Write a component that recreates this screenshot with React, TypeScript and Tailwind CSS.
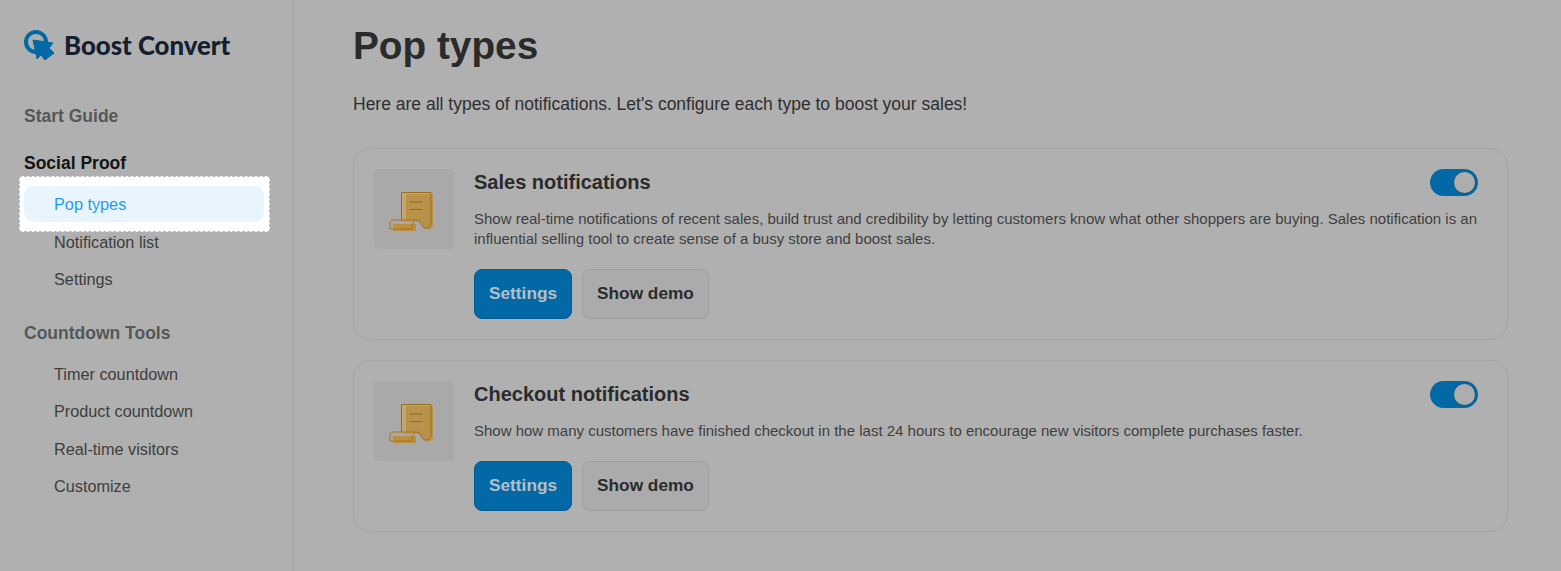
import React from 'react';

const ReceiptIcon = () => (
    <svg width="80" height="80" viewBox="0 0 80 80" fill="none">
        <path d="M28 25H59V56C59 59 56.5 60.5 53.5 60.5C49.5 60.5 48.5 57 47.5 55C46.5 53 45 52.5 42.5 52.5H28Z" fill="#b8924b" />
        <path d="M28 24.5H32V51H28Z" fill="#c4a672" />
        <path d="M27.5 51V23.5H57V54C57 57.5 54.5 59 52 59C48 59 47.5 55 46 53C45 51.5 43 51 41 51" stroke="#9c6f1c" strokeWidth="1" />
        <path d="M36 33H48M36 40.5H48" stroke="#96691a" strokeWidth="1" />
        <path d="M19 55H42V62H19Z" fill="#bb8f3d" />
        <path d="M41 51H19C17 51 16 52 16 54V60H38C38 56 39 53 41 51Z" stroke="#a9761b" strokeWidth="1" />
    </svg>
);

const Logo = () => (
    <svg width="32" height="32" viewBox="0 0 32 32" fill="none">
        <circle cx="12" cy="13" r="10" stroke="#0368a6" strokeWidth="4" />
        <path d="M9 11L29 14L25 19L30 24L21 31L17 26L13 30Z" fill="#0368a6" stroke="#0368a6" strokeWidth="1" strokeLinejoin="round" />
    </svg>
);

const SubItem = ({ label }: { label: string }) => (
    <div className="h-[37.5px] pl-[30px] flex items-center text-[16.25px] text-[#3e3e3e]">{label}</div>
);

const NotificationCard = ({ title, text }: { title: string; text: React.ReactNode }) => (
    <div className="flex border border-[#a5a5a5] rounded-[16px] p-5 pr-[29px]">
        <div className="w-20 h-20 shrink-0 rounded-[4px] bg-[#a9a9a9]">
            <ReceiptIcon />
        </div>
        <div className="ml-5 flex-1 min-w-0">
            <div className="flex items-start justify-between">
                <h2 className="text-[20px] leading-[26px] font-bold text-[#2b2b2b]">{title}</h2>
                <div className="w-12 h-[27px] rounded-full bg-[#0368a6] flex items-center justify-end pr-[3px]">
                    <div className="w-[21px] h-[21px] rounded-full bg-[#adadad] shadow-[0_0_0_1px_#1c5a84]" />
                </div>
            </div>
            <p className="mt-[13px] text-[15px] leading-[20px] text-[#3f3f3f]">{text}</p>
            <div className="mt-[20px] flex gap-[10px]">
                <button className="h-[50px] px-[14px] rounded-[8px] bg-[#0368a6] border border-[#025a90] text-[17.25px] font-bold text-[#b4bfc6]">Settings</button>
                <button className="h-[50px] px-[14px] rounded-[8px] bg-[#ababab] border border-[#9f9f9f] text-[17.25px] font-bold text-[#2b2b2b]">Show demo</button>
            </div>
        </div>
    </div>
);

export default function App() {
    return (
        <div className="w-[1561px] h-[571px] overflow-hidden flex bg-[#b0b0b0] font-['Liberation_Sans',Arial,sans-serif]">
            <aside className="w-[294px] shrink-0 border-r border-[#a3a3a3] pl-6 pr-[29px] pt-[29px]">
                <div className="flex items-center gap-2">
                    <Logo />
                    <span className="font-['Lato',sans-serif] font-black text-[25.75px] leading-[32px] text-[#14202f]">Boost Convert</span>
                </div>
                <div className="mt-[43px] text-[17.5px] leading-[24px] font-bold text-[#54585a]">Start Guide</div>
                <div className="mt-[23px] text-[17.5px] leading-[24px] font-bold text-[#141414]">Social Proof</div>
                <div className="mt-[1px] -mb-[9px] -ml-[5px] -mr-[6px] py-[9px] pl-[5px] pr-[6px] bg-white outline-1 outline-dashed outline-[#b9b9b9] -outline-offset-1">
                    <div className="h-[36px] my-px rounded-[10px] bg-[#e8f5fe] pl-[30px] flex items-center text-[16.25px] text-[#1f9cf0]">Pop types</div>
                </div>
                <SubItem label="Notification list" />
                <SubItem label="Settings" />
                <div className="mt-[23px] mb-[10.25px] text-[17.5px] leading-[24px] font-bold text-[#54585a]">Countdown Tools</div>
                <SubItem label="Timer countdown" />
                <SubItem label="Product countdown" />
                <SubItem label="Real-time visitors" />
                <SubItem label="Customize" />
            </aside>
            <main className="flex-1 pl-[59px] pr-[53px] pt-[22px]">
                <h1 className="text-[38.75px] leading-[48px] font-bold text-[#2b2b2b]">Pop types</h1>
                <p className="mt-[21px] text-[17.5px] leading-[26px] text-[#2f2f2f]">Here are all types of notifications. Let's configure each type to boost your sales!</p>
                <div className="mt-[31px] flex flex-col gap-5">
                    <NotificationCard
                        title="Sales notifications"
                        text="Show real-time notifications of recent sales, build trust and credibility by letting customers know what other shoppers are buying. Sales notification is an influential selling tool to create sense of a busy store and boost sales."
                    />
                    <NotificationCard
                        title="Checkout notifications"
                        text="Show how many customers have finished checkout in the last 24 hours to encourage new visitors complete purchases faster."
                    />
                </div>
            </main>
        </div>
    );
}
